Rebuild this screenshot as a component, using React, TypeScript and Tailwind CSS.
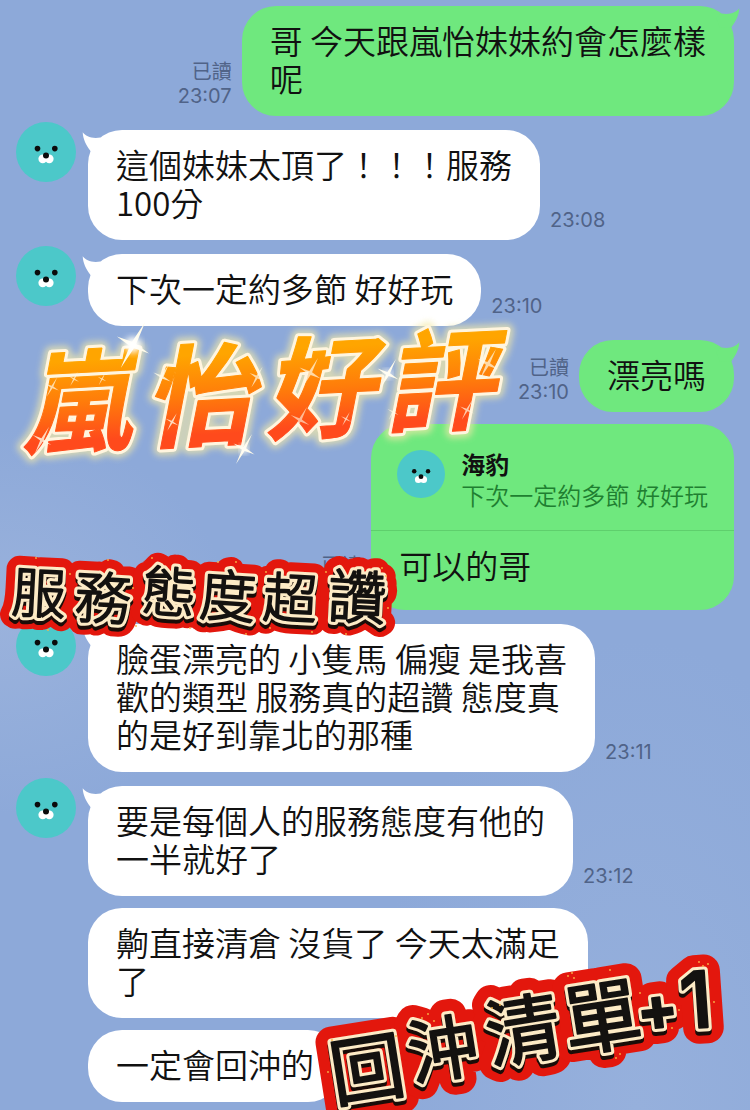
import type { ReactNode } from "react";

type Message = {
  id: number;
  from: "me" | "friend";
  text: string;
  time?: string;
  first?: boolean;
  quote?: { name: string; text: string };
};

const MESSAGES: Message[] = [
  { id: 1, from: "me", text: "哥 今天跟嵐怡妹妹約會怎麼樣\n呢", time: "23:07", first: true },
  { id: 2, from: "friend", text: "這個妹妹太頂了！！！服務\n100分", time: "23:08", first: true },
  { id: 3, from: "friend", text: "下次一定約多節 好好玩", time: "23:10", first: true },
  { id: 4, from: "me", text: "漂亮嗎", time: "23:10", first: true },
  {
    id: 5,
    from: "me",
    text: "可以的哥",
    time: "23:10",
    quote: { name: "海豹", text: "下次一定約多節 好好玩" },
  },
  {
    id: 6,
    from: "friend",
    text: "臉蛋漂亮的 小隻馬 偏瘦 是我喜\n歡的類型 服務真的超讚 態度真\n的是好到靠北的那種",
    time: "23:11",
    first: true,
  },
  { id: 7, from: "friend", text: "要是每個人的服務態度有他的\n一半就好了", time: "23:12", first: true },
  { id: 8, from: "friend", text: "齁直接清倉 沒貨了 今天太滿足\n了", time: "23:12" },
  { id: 9, from: "friend", text: "一定會回沖的" },
];

function SealAvatar({ className }: { className: string }) {
  return (
    <svg viewBox="0 0 60 60" className={className} aria-hidden="true">
      <circle cx="30" cy="30" r="30" fill="#4cc8c9" />
      <ellipse cx="26.7" cy="36.8" rx="4.3" ry="4.4" fill="#fff" />
      <ellipse cx="33.3" cy="36.8" rx="4.3" ry="4.4" fill="#fff" />
      <circle cx="21.5" cy="26.6" r="2.8" fill="#0b0b0b" />
      <circle cx="38.8" cy="26.6" r="2.8" fill="#0b0b0b" />
      <circle cx="30" cy="33.4" r="3" fill="#0b0b0b" />
    </svg>
  );
}

function Tail({ mine }: { mine: boolean }) {
  return (
    <svg
      viewBox="0 0 24 24"
      className={
        mine
          ? "absolute -right-1.5 top-0 size-6 -scale-x-100 text-[#6fe87e]"
          : "absolute -left-1.5 top-0 size-6 text-white"
      }
      aria-hidden="true"
    >
      <path d="M.7 2.200C4 6 9 9 18.500 7.500L24 12L20 22L8.500 21C4 15 1 9 .7 2.200Z" fill="currentColor" />
    </svg>
  );
}

function Meta({ mine, time }: { mine: boolean; time: string }) {
  return (
    <div
      className={`flex shrink-0 flex-col pb-2 text-xl leading-6 text-[#506388] ${
        mine ? "items-end" : "items-start"
      }`}
    >
      {mine && <span>已讀</span>}
      <time>{time}</time>
    </div>
  );
}

function Row({ message }: { message: Message }) {
  const { text, time, first, quote } = message;
  const mine = message.from === "me";

  return (
    <li
      className={`flex gap-2.5 ${mine ? "flex-row-reverse" : "flex-row"} ${
        first ? "mt-3.5 first:mt-0" : "mt-3"
      }`}
    >
      {!mine && (
        <div className="mr-0.5 w-15 shrink-0">
          {first && <SealAvatar className="-mt-2 size-15" />}
        </div>
      )}
      <div
        className={`relative rounded-[34px] text-[#111] ${mine ? "bg-[#6fe87e]" : "bg-white"}`}
      >
        {first && <Tail mine={mine} />}
        {quote && (
          <div className="flex gap-4 border-b border-[#5fcf6d] pt-[26px] pr-[26px] pb-[18px] pl-[26px] text-2xl leading-[31px]">
            <SealAvatar className="size-12 shrink-0" />
            <div>
              <p className="font-bold">{quote.name}</p>
              <p className="font-[350] text-[#1f7f31]">{quote.text}</p>
            </div>
          </div>
        )}
        <p
          className={`whitespace-pre-line px-7 pt-[15px] font-['Noto_Sans_CJK_TC',sans-serif] text-[33px] leading-[38px] font-[350] ${
            quote ? "pb-[26px]" : "pb-[19px]"
          }`}
        >
          {text}
        </p>
      </div>
      {time && (
        <div className="flex items-end">
          <Meta mine={mine} time={time} />
        </div>
      )}
    </li>
  );
}

const SPARKLES = [
  { x: 133, y: 43, r: 26, o: 1 },
  { x: 244, y: 147, r: 17, o: 1 },
  { x: 388, y: 72, r: 17, o: 1 },
  { x: 52, y: 85, r: 11, o: 0.7 },
  { x: 42, y: 138, r: 15, o: 0.8 },
  { x: 74, y: 77, r: 8, o: 0.7 },
  { x: 102, y: 77, r: 7, o: 0.7 },
  { x: 162, y: 75, r: 14, o: 0.8 },
  { x: 172, y: 120, r: 10, o: 0.8 },
  { x: 257, y: 75, r: 12, o: 0.7 },
  { x: 310, y: 71, r: 17, o: 0.7 },
  { x: 300, y: 118, r: 15, o: 0.6 },
  { x: 346, y: 117, r: 8, o: 0.7 },
  { x: 393, y: 110, r: 9, o: 0.7 },
  { x: 467, y: 108, r: 11, o: 0.7 },
  { x: 488, y: 62, r: 17, o: 0.7 },
];

function TitleSticker() {
  return (
    <svg
      viewBox="0 0 530 170"
      className="absolute top-[302px] left-0 h-[170px] w-[530px] overflow-visible"
    >
      <defs>
        <linearGradient id="fire" gradientUnits="userSpaceOnUse" x1="0" y1="-92" x2="0" y2="8">
          <stop offset="0.1" stopColor="#ffa500" />
          <stop offset="0.5" stopColor="#ff7d0a" />
          <stop offset="0.9" stopColor="#ff4a1c" />
        </linearGradient>
        <filter id="glow" x="-20%" y="-30%" width="140%" height="160%">
          <feGaussianBlur stdDeviation="3" />
        </filter>
        <g
          id="title"
          fontSize="110"
          fontWeight="700"
          fontStyle="italic"
          textAnchor="middle"
          strokeLinejoin="round"
        >
          <text transform="translate(77 141) rotate(-3)">嵐</text>
          <text transform="translate(200 135) rotate(-3)">怡</text>
          <text transform="translate(320 127) rotate(-3)">好</text>
          <text transform="translate(440 120) rotate(-3)">評</text>
        </g>
      </defs>
      <use href="#title" fill="#f3e9a8" stroke="#f3e9a8" strokeWidth="14" opacity="0.7" filter="url(#glow)" />
      <use href="#title" fill="#fff5df" stroke="#fff5df" strokeWidth="7" />
      <use href="#title" fill="url(#fire)" stroke="url(#fire)" strokeWidth="1" />
      {SPARKLES.map(({ x, y, r, o }) => (
        <path
          key={`${x}-${y}`}
          transform={`translate(${x} ${y}) rotate(28) scale(${r / 10})`}
          d="M0-10L.9-.9 7 0 .9.9 0 10-.9.9-7 0-.9-.9Z"
          fill="#fffbe9"
          opacity={o}
        />
      ))}
      <circle cx="133" cy="43" r="8" fill="#fff" filter="url(#glow)" />
      <circle cx="388" cy="72" r="4" fill="#fff" filter="url(#glow)" />
      <circle cx="244" cy="147" r="4" fill="#fff" filter="url(#glow)" />
    </svg>
  );
}

type Glyph = { char: string; x: number; y: number; size: number; turn: number; weight?: number };

const SERVICE: Glyph[] = [
  { char: "服", x: 39, y: 63, size: 54, turn: 3 },
  { char: "務", x: 103, y: 68, size: 56, turn: 3 },
  { char: "態", x: 169, y: 62, size: 54, turn: 4 },
  { char: "度", x: 228, y: 66, size: 56, turn: 4 },
  { char: "超", x: 290, y: 68, size: 54, turn: 3 },
  { char: "讚", x: 357, y: 67, size: 58, turn: 3 },
];

const RETURN_LIST: Glyph[] = [
  { char: "回", x: 57, y: 149, size: 74, turn: -9 },
  { char: "沖", x: 133, y: 129, size: 70, turn: -9 },
  { char: "清", x: 213, y: 110, size: 74, turn: -9 },
  { char: "單", x: 292, y: 97, size: 78, turn: -9 },
  { char: "+", x: 347, y: 88, size: 60, turn: -7, weight: 700 },
  { char: "1", x: 386, y: 79, size: 78, turn: -4, weight: 500 },
];

function BrushSticker({
  id,
  glyphs,
  className,
  viewBox,
  outline,
  weight,
  children,
}: {
  id: string;
  glyphs: Glyph[];
  className: string;
  viewBox: string;
  outline: number;
  weight: number;
  children?: ReactNode;
}) {
  return (
    <svg viewBox={viewBox} className={className}>
      <defs>
        <g id={id} textAnchor="middle" strokeLinejoin="round" strokeLinecap="round">
          {glyphs.map(({ char, x, y, size, turn, weight: own }) => (
            <text
              key={char}
              fontSize={size}
              fontWeight={own ?? weight}
              transform={`translate(${x} ${y}) rotate(${turn}) translate(0 ${size * 0.37})`}
            >
              {char}
            </text>
          ))}
        </g>
      </defs>
      <use href={`#${id}`} fill="#e3170d" stroke="#e3170d" strokeWidth={outline} />
      <use href={`#${id}`} y="4" fill="#1a0d08" stroke="#1a0d08" strokeWidth="8" />
      <use href={`#${id}`} fill="#fdebc6" stroke="#fdebc6" strokeWidth="8" />
      <use href={`#${id}`} fill="#141210" stroke="#141210" strokeWidth="2" />
      {children}
    </svg>
  );
}

function Specks({ points }: { points: number[][] }) {
  return (
    <g fill="#f8b545">
      {points.map(([x, y]) => (
        <circle key={`${x}-${y}`} cx={x} cy={y} r="0.9" />
      ))}
    </g>
  );
}

export default function App() {
  return (
    <main className="relative min-h-screen overflow-hidden bg-[#8da9d9] bg-[radial-gradient(ellipse_at_0%_56%,#9ab2dc_0%,transparent_22%),radial-gradient(ellipse_at_85%_100%,#96b0dc_0%,transparent_30%)] px-4 pt-1.5 pb-2 font-[Inter,'Noto_Sans_CJK_TC',sans-serif]">
      <ol>
        {MESSAGES.map((message) => (
          <Row key={message.id} message={message} />
        ))}
      </ol>

      <TitleSticker />

      <BrushSticker
        id="service"
        glyphs={SERVICE}
        viewBox="0 0 400 120"
        outline={26}
        weight={300}
        className="absolute top-[530px] left-0 h-[120px] w-[400px] overflow-visible"
      >
        <Specks points={[[36, 28], [48, 100], [70, 44], [108, 30], [133, 58], [136, 96], [152, 28], [190, 98], [218, 32], [236, 32], [246, 104], [266, 42], [270, 98], [312, 102], [326, 42], [382, 38], [386, 46], [346, 104], [388, 78]]} />
      </BrushSticker>

      <BrushSticker
        id="return-list"
        glyphs={RETURN_LIST}
        viewBox="0 0 440 200"
        outline={32}
        weight={400}
        className="absolute top-[920px] left-[310px] h-[200px] w-[440px] overflow-visible"
      >
        <Specks points={[[22, 120], [18, 152], [86, 116], [112, 98], [124, 101], [118, 94], [182, 88], [190, 85], [258, 56], [264, 58], [262, 53], [300, 50], [306, 138], [310, 134], [330, 73], [398, 44], [393, 46], [389, 42], [404, 82], [369, 90], [362, 108]]} />
      </BrushSticker>
    </main>
  );
}
